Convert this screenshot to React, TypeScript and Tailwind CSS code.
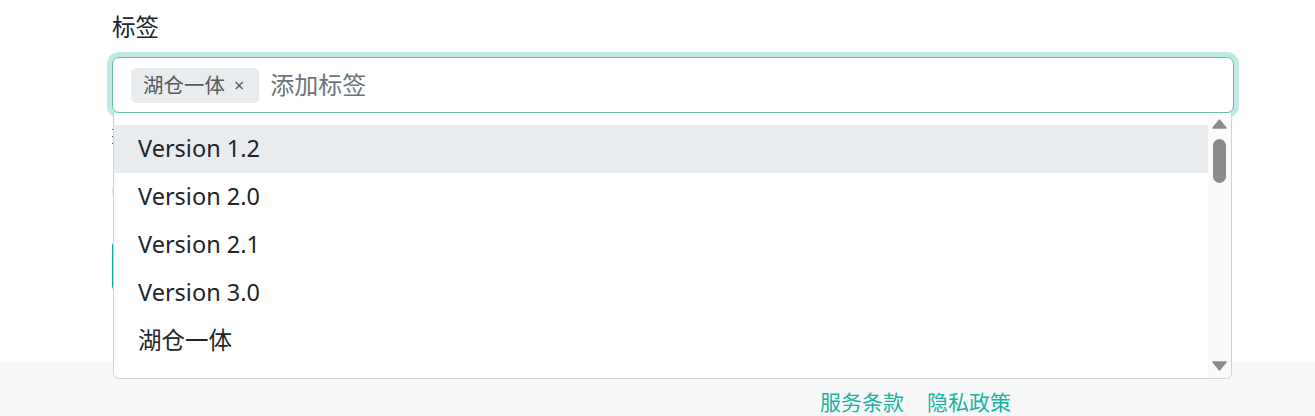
import React from "react";

const items = ["Version 1.2", "Version 2.0", "Version 2.1", "Version 3.0", "湖仓一体"];

export default function App() {
  return (
    <div
      className="w-[1315px] h-[416px] bg-white overflow-hidden flex flex-col"
      style={{ fontFamily: '"Noto Sans", "Noto Sans CJK SC", sans-serif' }}
    >
      <div className="h-[362px] shrink-0 pl-[112px] pt-[11px]">
        <div className="text-[23.5px] leading-[32px] text-[#212529]">标签</div>
        <div className="relative w-[1122px] mt-[14px]">
          <div className="h-[56px] rounded-[7px] border border-[#63bfae] shadow-[0_0_0_5px_#bfeae4] flex items-center pl-[18px] gap-[11px] bg-white">
            <span className="h-[35px] rounded-[5px] bg-[#e9ecef] flex items-center pl-[12px] pr-[15px] gap-[9px] text-[20.5px] text-[#555b61]">
              湖仓一体<span className="text-[18px] text-[#555b61]">×</span>
            </span>
            <span className="text-[24px] text-[#6c757d]">添加标签</span>
          </div>
          <div className="mt-[14px] flex flex-col gap-[6px] pt-[2px]">
            <div className="w-[3px] h-[1px] bg-[#555]" />
            <div className="w-[3px] h-[1px] bg-[#555]" />
            <div className="w-[3px] h-[1px] bg-[#555]" />
          </div>
          <div className="mt-[38px] w-[18px] h-[18px] rounded-full border border-[#dee2e6]" />
          <div className="mt-[40px] w-[120px] h-[52px] rounded-[6px] bg-[#0fa896]" />

          <div className="absolute left-[1px] top-[56px] w-[1119px] h-[266px] bg-white border border-[#cfd1d4] border-t-0 rounded-b-[6px] flex overflow-hidden">
            <div className="flex-1 pt-[12px]">
              {items.map((t, i) => (
                <div
                  key={t}
                  className={`h-[48px] flex items-center pl-[24px] text-[23.5px] text-[#212529] ${i === 0 ? "bg-[#e9ecef]" : ""}`}
                >
                  {t}
                </div>
              ))}
            </div>
            <div className="w-[23px] bg-[#fafafa] flex flex-col items-center">
              <svg width="15" height="10" viewBox="0 0 15 10" className="mt-[6px]">
                <path d="M7.5 1 L14 9 L1 9 Z" fill="#8b8b8b" strokeLinejoin="round" stroke="#8b8b8b" strokeWidth="1.5" />
              </svg>
              <div className="mt-[10px] w-[13px] h-[44px] rounded-full bg-[#8b8b8b]" />
              <div className="flex-1" />
              <svg width="15" height="10" viewBox="0 0 15 10" className="mb-[7px]">
                <path d="M1 1 L14 1 L7.5 9 Z" fill="#8b8b8b" strokeLinejoin="round" stroke="#8b8b8b" strokeWidth="1.5" />
              </svg>
            </div>
          </div>
        </div>
      </div>
      <div className="flex-1 bg-[#f7f8fa] flex items-start pt-[28px] pl-[820px] gap-[23px] text-[21px] leading-[24px] text-[#17b3a3]">
        <span>服务条款</span>
        <span>隐私政策</span>
      </div>
    </div>
  );
}
